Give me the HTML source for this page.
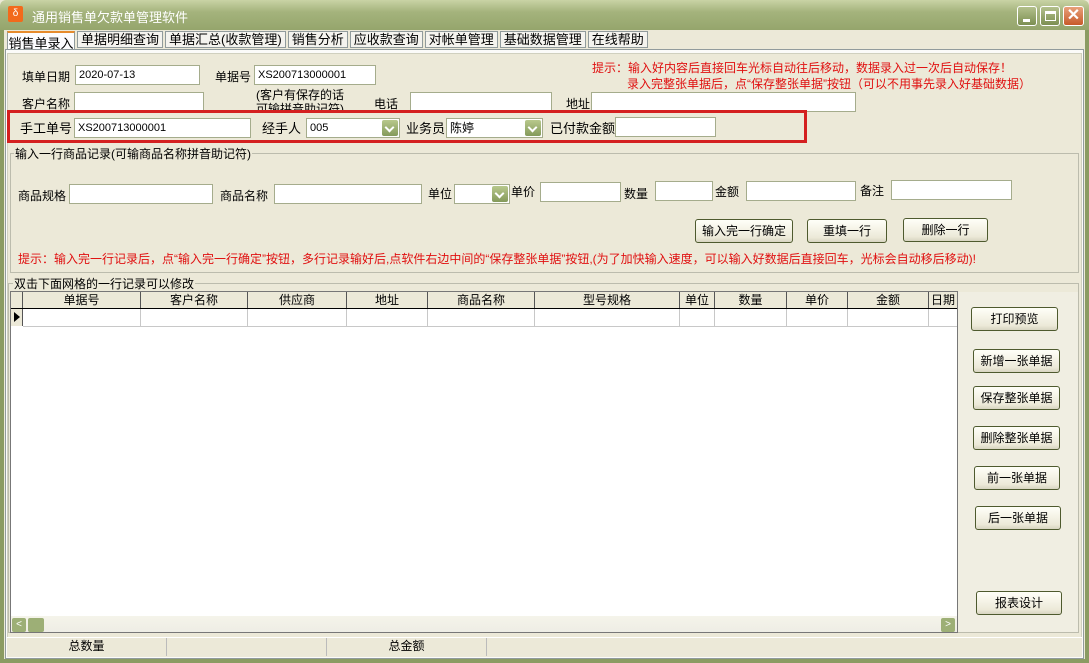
<!DOCTYPE html>
<html><head><meta charset="utf-8"><style>
*{margin:0;padding:0;box-sizing:border-box}
body{width:1089px;height:663px;overflow:hidden;background:#ece9d8;font-family:"Liberation Sans","WenQuanYi Zen Hei","Noto Sans CJK SC",sans-serif;font-size:12px;color:#000;position:relative}
.a{position:absolute;white-space:nowrap}
.in{position:absolute;background:#fff;border:1px solid #a5ac8c;height:20px;font-size:11px;line-height:18px;padding-left:3px}
.btn{position:absolute;border:1px solid #4e5a2e;border-radius:3px;background:linear-gradient(#fffff8,#ece9d8 80%,#d8d5c2);text-align:center;font-size:12px;height:24px;line-height:22px}
.dd{position:absolute;right:1px;top:1px;width:16px;height:16px;background:linear-gradient(#b8c88c,#849a5a);border-radius:2px}
.dd:after{content:"";position:absolute;left:4px;top:4px;width:5px;height:5px;border-right:2px solid #fff;border-bottom:2px solid #fff;transform:rotate(45deg)}
.red{color:#e01010}
.th{position:absolute;top:292px;height:17px;border-right:1px solid #555;text-align:center;line-height:16px;background:#ece9d8}
.gc{position:absolute;top:309px;height:17px;border-right:1px solid #c8c8c8}
</style></head><body>
<div class="a" style="left:0;top:0;width:1089px;height:30px;background:linear-gradient(#c9d3a5,#a4b37c 40%,#95a56c);border-radius:6px 6px 0 0"></div>
<div class="a" style="left:8px;top:6px;width:15px;height:16px;background:#f26a1b;border-radius:2px;color:#fff;font-size:10px;text-align:center;line-height:16px">δ</div>
<div class="a" style="left:32px;top:7px;color:#fff;font-size:13px">通用销售单欠款单管理软件</div>
<div class="a" style="left:1017px;top:6px;width:20px;height:20px;border:1px solid #fff;border-radius:3px;background:linear-gradient(#b3c08c,#7c8f52)"><div style="position:absolute;left:5px;top:12px;width:7px;height:3px;background:#fff"></div></div>
<div class="a" style="left:1040px;top:6px;width:20px;height:20px;border:1px solid #fff;border-radius:3px;background:linear-gradient(#b3c08c,#7c8f52)"><div style="position:absolute;left:4px;top:4px;width:11px;height:10px;border:1px solid #fff;border-top-width:3px"></div></div>
<div class="a" style="left:1063px;top:6px;width:21px;height:20px;border:1px solid #fff;border-radius:3px;background:linear-gradient(#e8a07a,#c75a2a);color:#fff;font-size:16px;text-align:center;line-height:18px;font-weight:bold">✕</div>
<div class="a" style="left:0;top:30px;width:4px;height:633px;background:#8b9b62"></div>
<div class="a" style="left:1085px;top:30px;width:4px;height:633px;background:#8b9b62"></div>
<div class="a" style="left:0;top:659px;width:1089px;height:4px;background:#8b9b62"></div>
<div class="a" style="left:7px;top:31px;width:68px;height:18px;background:#fcfcfe;border:1px solid #919b9c;border-bottom:none;border-top:2px solid #e68b2c;font-size:13px;text-align:center">销售单录入</div>
<div class="a" style="left:77px;top:32px;font-size:13px;line-height:16px">
<span style="border:1px solid #919b9c;padding:0 3px;background:#f4f3ee">单据明细查询</span><span style="border:1px solid #919b9c;padding:0 3px;background:#f4f3ee;margin-left:2px">单据汇总(收款管理)</span><span style="border:1px solid #919b9c;padding:0 3px;background:#f4f3ee;margin-left:2px">销售分析</span><span style="border:1px solid #919b9c;padding:0 3px;background:#f4f3ee;margin-left:2px">应收款查询</span><span style="border:1px solid #919b9c;padding:0 3px;background:#f4f3ee;margin-left:2px">对帐单管理</span><span style="border:1px solid #919b9c;padding:0 3px;background:#f4f3ee;margin-left:2px">基础数据管理</span><span style="border:1px solid #919b9c;padding:0 3px;background:#f4f3ee;margin-left:2px">在线帮助</span></div>
<div class="a" style="left:5px;top:49px;width:1079px;height:610px;border:1px solid #919b9c;background:#fbfbf9"></div>
<div class="a" style="left:7px;top:53px;width:1075px;height:604px;background:#ece9d8;border:1px solid #d0d0bf"></div>
<div class="a" style="left:22px;top:68px;font-size:12px">填单日期</div>
<div class="in" style="left:75px;top:65px;width:125px">2020-07-13</div>
<div class="a" style="left:215px;top:68px">单据号</div>
<div class="in" style="left:254px;top:65px;width:122px">XS200713000001</div>
<div class="a red" style="left:592px;top:60px;line-height:16px">提示：输入好内容后直接回车光标自动往后移动，数据录入过一次后自动保存！<br><span style="margin-left:35px">录入完整张单据后，点“保存整张单据”按钮（可以不用事先录入好基础数据）</span></div>
<div class="a" style="left:22px;top:95px">客户名称</div>
<div class="in" style="left:74px;top:92px;width:130px"></div>
<div class="a" style="left:256px;top:88px;line-height:14px">(客户有保存的话<br>可输拼音助记符)</div>
<div class="a" style="left:374px;top:95px">电话</div>
<div class="in" style="left:410px;top:92px;width:142px"></div>
<div class="a" style="left:566px;top:95px">地址</div>
<div class="in" style="left:591px;top:92px;width:265px"></div>
<div class="a" style="left:7px;top:110px;width:800px;height:33px;border:3px solid #d42020;background:#ece9d8"></div>
<div class="a" style="left:20px;top:118px;font-size:13px">手工单号</div>
<div class="in" style="left:74px;top:118px;width:177px">XS200713000001</div>
<div class="a" style="left:262px;top:118px;font-size:13px">经手人</div>
<div class="in" style="left:306px;top:118px;width:94px">005<div class="dd"></div></div>
<div class="a" style="left:406px;top:118px;font-size:13px">业务员</div>
<div class="in" style="left:446px;top:118px;width:97px;font-size:12px">陈婷<div class="dd"></div></div>
<div class="a" style="left:550px;top:118px;font-size:13px">已付款金额</div>
<div class="in" style="left:615px;top:117px;width:101px"></div>
<div class="a" style="left:10px;top:153px;width:1069px;height:120px;border:1px solid #bcbcad"></div>
<div class="a" style="left:14px;top:145px;background:#ece9d8;padding:0 1px">输入一行商品记录(可输商品名称拼音助记符)</div>
<div class="a" style="left:18px;top:187px">商品规格</div>
<div class="in" style="left:69px;top:184px;width:144px"></div>
<div class="a" style="left:220px;top:187px">商品名称</div>
<div class="in" style="left:274px;top:184px;width:148px"></div>
<div class="a" style="left:428px;top:185px">单位</div>
<div class="in" style="left:454px;top:184px;width:56px"><div class="dd"></div></div>
<div class="a" style="left:511px;top:183px">单价</div>
<div class="in" style="left:540px;top:182px;width:81px"></div>
<div class="a" style="left:624px;top:185px">数量</div>
<div class="in" style="left:655px;top:181px;width:58px"></div>
<div class="a" style="left:715px;top:183px">金额</div>
<div class="in" style="left:746px;top:181px;width:110px"></div>
<div class="a" style="left:860px;top:182px">备注</div>
<div class="in" style="left:891px;top:180px;width:121px"></div>
<div class="btn" style="left:695px;top:219px;width:98px">输入完一行确定</div>
<div class="btn" style="left:807px;top:219px;width:80px">重填一行</div>
<div class="btn" style="left:903px;top:218px;width:85px">删除一行</div>
<div class="a red" style="left:18px;top:250px">提示：输入完一行记录后，点“输入完一行确定”按钮，多行记录输好后,点软件右边中间的“保存整张单据”按钮,(为了加快输入速度，可以输入好数据后直接回车，光标会自动移后移动)!</div>
<div class="a" style="left:8px;top:283px;width:1071px;height:350px;border:1px solid #bcbcad"></div>
<div class="a" style="left:13px;top:275px;background:#ece9d8;padding:0 1px">双击下面网格的一行记录可以修改</div>
<div class="a" style="left:958px;top:292px;width:120px;height:340px;background:#f0eee2"></div>
<div class="a" style="left:10px;top:291px;width:948px;height:342px;background:#fff;border:1px solid #777"></div>
<div class="th" style="left:11px;width:12px"></div>
<div class="th" style="left:23px;width:118px">单据号</div>
<div class="th" style="left:141px;width:107px">客户名称</div>
<div class="th" style="left:248px;width:99px">供应商</div>
<div class="th" style="left:347px;width:81px">地址</div>
<div class="th" style="left:428px;width:107px">商品名称</div>
<div class="th" style="left:535px;width:145px">型号规格</div>
<div class="th" style="left:680px;width:35px">单位</div>
<div class="th" style="left:715px;width:72px">数量</div>
<div class="th" style="left:787px;width:61px">单价</div>
<div class="th" style="left:848px;width:81px">金额</div>
<div class="th" style="left:929px;width:28px;border-right:none">日期</div>
<div class="a" style="left:11px;top:308px;width:946px;height:1px;background:#000"></div>
<div class="a" style="left:11px;top:309px;width:12px;height:17px;background:#ece9d8;border-right:1px solid #555"><div style="position:absolute;left:3px;top:3px;border-left:6px solid #000;border-top:5px solid transparent;border-bottom:5px solid transparent"></div></div>
<div class="gc" style="left:23px;width:118px"></div><div class="gc" style="left:141px;width:107px"></div><div class="gc" style="left:248px;width:99px"></div><div class="gc" style="left:347px;width:81px"></div><div class="gc" style="left:428px;width:107px"></div><div class="gc" style="left:535px;width:145px"></div><div class="gc" style="left:680px;width:35px"></div><div class="gc" style="left:715px;width:72px"></div><div class="gc" style="left:787px;width:61px"></div><div class="gc" style="left:848px;width:81px"></div>
<div class="a" style="left:23px;top:326px;width:934px;height:1px;background:#c8c8c8"></div>
<div class="a" style="left:11px;top:616px;width:946px;height:16px;background:linear-gradient(#f5f4ea,#eeede5)"></div>
<div class="a" style="left:12px;top:618px;width:14px;height:14px;background:#9daf76;border-radius:2px;color:#fff;font-size:10px;line-height:14px;text-align:center">&lt;</div>
<div class="a" style="left:28px;top:618px;width:16px;height:14px;background:#9daf76;border-radius:2px"></div>
<div class="a" style="left:941px;top:618px;width:14px;height:14px;background:#9daf76;border-radius:2px;color:#fff;font-size:10px;line-height:14px;text-align:center">&gt;</div>
<div class="btn" style="left:971px;top:307px;width:87px">打印预览</div>
<div class="btn" style="left:973px;top:349px;width:87px">新增一张单据</div>
<div class="btn" style="left:973px;top:386px;width:87px">保存整张单据</div>
<div class="btn" style="left:973px;top:426px;width:87px">删除整张单据</div>
<div class="btn" style="left:974px;top:466px;width:86px">前一张单据</div>
<div class="btn" style="left:975px;top:506px;width:86px">后一张单据</div>
<div class="btn" style="left:976px;top:591px;width:86px">报表设计</div>
<div class="a" style="left:7px;top:637px;width:1075px;height:20px;background:#ece9d8;border-top:1px solid #fff"></div>
<div class="a" style="left:7px;top:638px;width:160px;height:18px;border-right:1px solid #bbb;text-align:center;line-height:17px">总数量</div>
<div class="a" style="left:167px;top:638px;width:160px;height:18px;border-right:1px solid #bbb"></div>
<div class="a" style="left:327px;top:638px;width:160px;height:18px;border-right:1px solid #bbb;text-align:center;line-height:17px">总金额</div>
</body></html>
